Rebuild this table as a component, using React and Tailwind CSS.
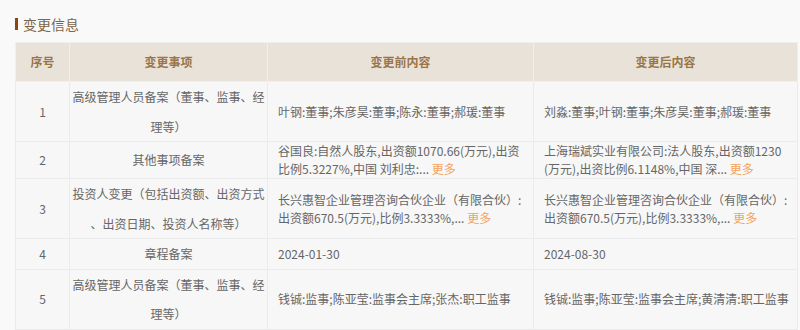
import React from "react";

const rows = [
  {
    no: "1",
    item: ["高级管理人员备案（董事、监事、经", "理等）"],
    before: ["叶钢:董事;朱彦昊:董事;陈永:董事;郝瑗:董事"],
    after: ["刘淼:董事;叶钢:董事;朱彦昊:董事;郝瑗:董事"],
  },
  {
    no: "2",
    item: ["其他事项备案"],
    before: ["谷国良:自然人股东,出资额1070.66(万元),出资", "比例5.3227%,中国 刘利忠:..."],
    after: ["上海瑞斌实业有限公司:法人股东,出资额1230", "(万元),出资比例6.1148%,中国 深..."],
    more: true,
  },
  {
    no: "3",
    item: ["投资人变更（包括出资额、出资方式", "、出资日期、投资人名称等）"],
    before: ["长兴惠智企业管理咨询合伙企业（有限合伙）:", "出资额670.5(万元),比例3.3333%,..."],
    after: ["长兴惠智企业管理咨询合伙企业（有限合伙）:", "出资额670.5(万元),比例3.3333%,..."],
    more: true,
  },
  {
    no: "4",
    item: ["章程备案"],
    before: ["2024-01-30"],
    after: ["2024-08-30"],
  },
  {
    no: "5",
    item: ["高级管理人员备案（董事、监事、经", "理等）"],
    before: ["钱铖:监事;陈亚莹:监事会主席;张杰:职工监事"],
    after: ["钱铖:监事;陈亚莹:监事会主席;黄清清:职工监事"],
  },
];

function Lines({ lines, more }) {
  return lines.map((line, i) => (
    <div key={i} className="whitespace-nowrap">
      {line}
      {more && i === lines.length - 1 ? (
        <span className="text-[#f5a25d] cursor-pointer"> 更多</span>
      ) : null}
    </div>
  ));
}

export default function App() {
  return (
    <div
      className="w-[800px] h-[330px] overflow-hidden bg-[#f9f9f9] px-[15px] pt-[14px]"
      style={{ fontFamily: '"Noto Sans CJK SC", "Noto Sans", sans-serif' }}
    >
      <div className="flex items-center gap-[5px] h-5 mb-[8px]">
        <span className="w-[3px] h-[12px] bg-[#8b4513]" />
        <h2 className="text-[14px] text-[#7d6548] font-normal">变更信息</h2>
      </div>

      <table className="table-fixed border-collapse w-[782px] text-[12px] text-[#666]">
        <colgroup>
          <col className="w-[54px]" />
          <col className="w-[198px]" />
          <col className="w-[266px]" />
          <col className="w-[264px]" />
        </colgroup>
        <thead>
          <tr className="bg-[#e9e2d8] text-[#9a7548] h-[39px]">
            <th className="border border-[#efefef] font-bold">序号</th>
            <th className="border border-[#efefef] font-bold">变更事项</th>
            <th className="border border-[#efefef] font-bold">变更前内容</th>
            <th className="border border-[#efefef] font-bold">变更后内容</th>
          </tr>
        </thead>
        <tbody>
          {rows.map((r) => (
            <tr key={r.no} className="bg-[#f7f7f7]">
              <td className="border border-[#ebebeb] text-center align-middle">{r.no}</td>
              <td className="border border-[#ebebeb] text-center align-middle px-[2px] leading-[29.5px]">
                <Lines lines={r.item} />
              </td>
              <td className="border border-[#ebebeb] align-middle px-[10px] leading-[18px]">
                <Lines lines={r.before} more={r.more} />
              </td>
              <td className="border border-[#ebebeb] align-middle px-[10px] leading-[18px]">
                <Lines lines={r.after} more={r.more} />
              </td>
            </tr>
          ))}
        </tbody>
      </table>
    </div>
  );
}
